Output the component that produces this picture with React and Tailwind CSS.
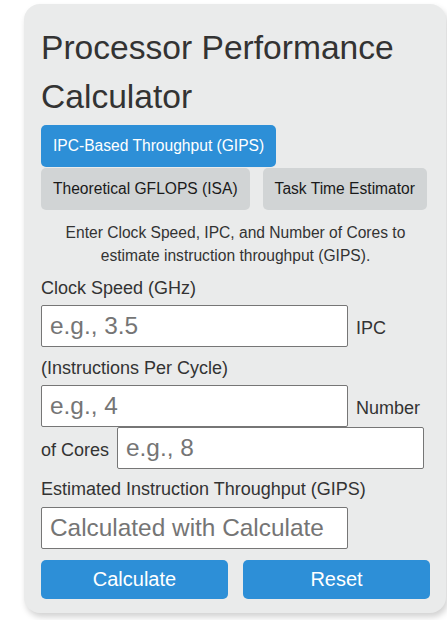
import { useState } from 'react';

const tabs = ['IPC-Based Throughput (GIPS)', 'Theoretical GFLOPS (ISA)', 'Task Time Estimator'];

export default function App() {
  const [active, setActive] = useState(0);
  const [clock, setClock] = useState('');
  const [ipc, setIpc] = useState('');
  const [cores, setCores] = useState('');
  const [result, setResult] = useState('');

  const calculate = () => {
    const v = parseFloat(clock) * parseFloat(ipc) * parseFloat(cores);
    setResult(isNaN(v) ? '' : v.toFixed(2));
  };

  const reset = () => {
    setClock('');
    setIpc('');
    setCores('');
    setResult('');
  };

  const inputCls = 'w-[307px] h-[42px] shrink-0 border border-[#767676] rounded-[2px] bg-white px-[8px] text-[24.4px] text-[#333] placeholder:text-[#757575] outline-none';

  return (
    <div className="min-h-[620px] bg-white font-['Liberation_Sans',Arial,sans-serif] text-[#333] pt-[4px]">
      <div className="ml-[24px] w-[422px] rounded-[16px] bg-[#eaebeb] pt-[19px] pl-[17px] pr-[16px] pb-[14px] shadow-[2px_4px_6px_rgba(0,0,0,0.18)]">
        <h1 className="text-[33.6px] leading-[49px] font-normal text-[#333]">Processor Performance Calculator</h1>

        <div className="mt-[4px] flex flex-wrap gap-x-[13px] gap-y-[1px]">
          {tabs.map((t, i) => (
            <button
              key={t}
              onClick={() => setActive(i)}
              className={`rounded-[5px] px-[12px] py-[12px] text-[15.6px] leading-[18px] ${active === i ? 'bg-[#2d8fd7] text-white' : 'bg-[#d1d4d5] text-[#1a1a1a]'}`}
            >
              {t}
            </button>
          ))}
        </div>

        <p className="mt-[11px] text-center text-[15.6px] leading-[23.4px] text-[#333]">
          Enter Clock Speed, IPC, and Number of Cores to estimate instruction throughput (GIPS).
        </p>

        <div className="text-[18px] leading-[27px]">
          <div className="mt-[7px]">Clock Speed (GHz)</div>
          <div className="mt-[3px] flex items-baseline gap-[8px]">
            <input className={inputCls} placeholder="e.g., 3.5" value={clock} onChange={e => setClock(e.target.value)} />
            <span>IPC</span>
          </div>
          <div className="mt-[8px]">(Instructions Per Cycle)</div>
          <div className="mt-[3px] flex items-baseline gap-[8px]">
            <input className={inputCls} placeholder="e.g., 4" value={ipc} onChange={e => setIpc(e.target.value)} />
            <span>Number</span>
          </div>
          <div className="flex items-baseline gap-[8px]">
            <span>of Cores</span>
            <input className={inputCls} placeholder="e.g., 8" value={cores} onChange={e => setCores(e.target.value)} />
          </div>
          <div className="mt-[7px]">Estimated Instruction Throughput (GIPS)</div>
          <div className="mt-[4px]">
            <input className={`${inputCls} pr-[23px]`} readOnly placeholder="Calculated with Calculate button" value={result} />
          </div>
        </div>

        <div className="mt-[11px] grid grid-cols-2 gap-[15px]">
          <button onClick={calculate} className="h-[39px] rounded-[5px] bg-[#2d8fd7] text-[20px] text-white">Calculate</button>
          <button onClick={reset} className="h-[39px] rounded-[5px] bg-[#2d8fd7] text-[20px] text-white">Reset</button>
        </div>
      </div>
    </div>
  );
}
